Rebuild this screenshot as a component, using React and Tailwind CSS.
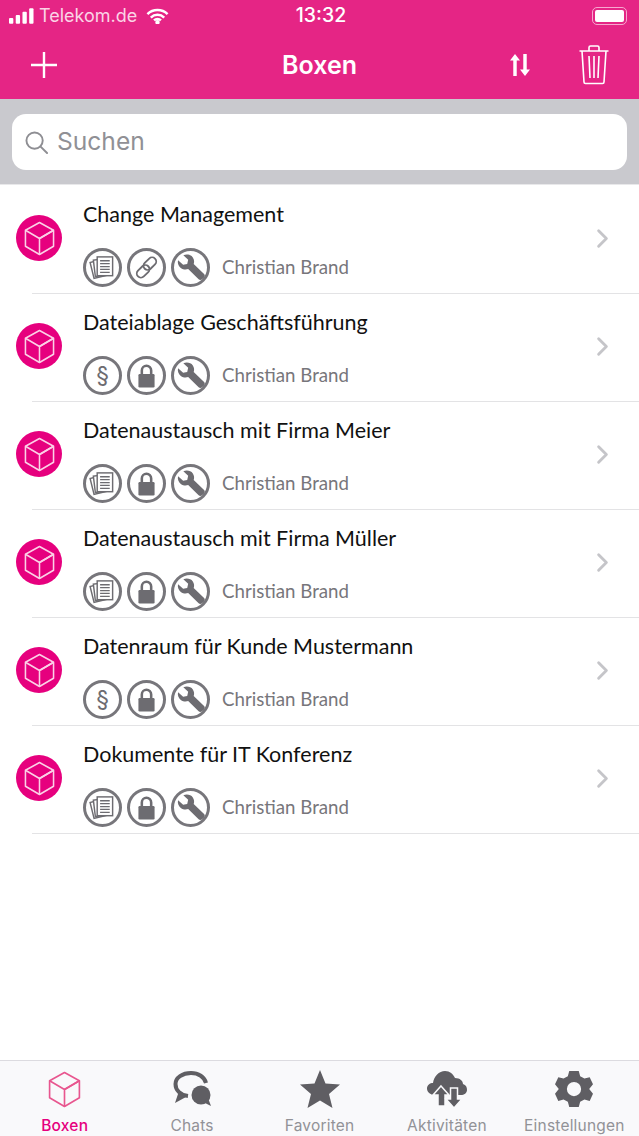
import { ChevronRight } from 'lucide-react'

const ROWS = [
  { title: 'Change Management', icons: ['docs', 'link', 'wrench'] },
  { title: 'Dateiablage Geschäftsführung', icons: ['para', 'lock', 'wrench'] },
  { title: 'Datenaustausch mit Firma Meier', icons: ['docs', 'lock', 'wrench'] },
  { title: 'Datenaustausch mit Firma Müller', icons: ['docs', 'lock', 'wrench'] },
  { title: 'Datenraum für Kunde Mustermann', icons: ['para', 'lock', 'wrench'] },
  { title: 'Dokumente für IT Konferenz', icons: ['docs', 'lock', 'wrench'] },
]

const SF = 'font-["Inter","Liberation_Sans",sans-serif]'

function Cube({ className, stroke = 'currentColor', width = 1.4 }) {
  return (
    <svg viewBox="0 0 32 36" className={className} fill="none" stroke={stroke} strokeWidth={width} strokeLinejoin="round">
      <path d="M16 1.5 30.5 9.5V26L16 34.5 1.5 26V9.5Z" />
      <path d="M1.5 9.5 16 18 30.5 9.5M16 18V34.5" />
      <path d="M16 18 30.5 9.5" />
    </svg>
  )
}

function Badge({ type }) {
  return (
    <div className="w-[39px] h-[39px] rounded-full border-[3px] border-[#77767b] flex items-center justify-center text-[#6d6c71] shrink-0">
      {type === 'para' && <span className={`${SF} text-[23px] leading-none`}>§</span>}
      {type === 'lock' && (
        <svg viewBox="0 0 20 28" className="w-[17px] h-[24px]">
          <path d="M4.5 13V7.500a5.500 5.500 0 0 1 11 0V13" fill="none" stroke="currentColor" strokeWidth="3" />
          <rect x="0.500" y="11.500" width="19" height="16" rx="1.500" fill="currentColor" />
        </svg>
      )}
      {type === 'wrench' && (
        <svg viewBox="0 0 32 32" className="w-[31px] h-[31px]" fill="currentColor">
          <path d="M3.2 8.6 8.4 13.2 12.6 12.4 13.6 8 8.6 3.4C12 1.9 16.4 2.7 18.4 5.6 19.9 7.8 20 10.3 19.3 12.4L30 22.6C31 23.6 31 25 30 26.2L28 28.2C26.8 29.2 25.4 29.2 24.4 28.2L13.6 17.6C11.2 18.4 8.4 18.2 6 16.4 3.4 14.4 2.4 11.4 3.2 8.6Z" />
        </svg>
      )}
      {type === 'link' && (
        <svg viewBox="0 0 28 28" className="w-[27px] h-[27px]" fill="none" stroke="currentColor" strokeWidth="1.900">
          <rect x="13.250" y="2.500" width="8.500" height="15" rx="4.250" transform="rotate(45 17.500 10)" />
          <rect x="6.250" y="10.500" width="8.500" height="15" rx="4.250" transform="rotate(45 10.500 18)" />
        </svg>
      )}
      {type === 'docs' && (
        <svg viewBox="0 0 28 28" className="w-[27px] h-[27px]" fill="#fff" stroke="currentColor" strokeWidth="1.500">
          <rect x="3" y="7" width="13" height="17" transform="rotate(-14 9.500 15.500)" />
          <rect x="5.500" y="5.500" width="14" height="17" transform="rotate(-7 12.500 14)" />
          <rect x="8.500" y="3" width="16" height="19.500" />
          <path d="M11.500 7h10M11.500 10h10M11.500 13h10M11.500 16h10M11.500 19h10" strokeWidth="1.300" />
        </svg>
      )}
    </div>
  )
}

function Row({ title, icons }) {
  return (
    <div className="h-[108px] flex items-center pl-[16px]">
      <div className="w-[46px] h-[46px] rounded-full bg-[#e6007e] flex items-center justify-center shrink-0 -translate-y-[2px]">
        <Cube className="w-[31px] h-[35px]" stroke="#fbd0e6" width={1.6} />
      </div>
      <div className="flex-1 h-full ml-[-30px] pl-[51px] border-b border-[#e3e3e5] flex items-center pr-[21px]">
        <div className="flex-1 pt-[14px] h-full">
          <div className='font-["Lato",sans-serif] text-[21.5px] leading-[29px] text-[#111]'>{title}</div>
          <div className="flex items-center gap-[5px] mt-[19px]">
            {icons.map((t, i) => <Badge key={i} type={t} />)}
            <span className='font-["Lato",sans-serif] text-[18.7px] text-[#77767b] ml-[7px]'>Christian Brand</span>
          </div>
        </div>
        <ChevronRight size={31} strokeWidth={2.2} className="text-[#c5c5c9] -translate-y-[1px]" />
      </div>
    </div>
  )
}

function Tab({ label, active, children }) {
  return (
    <div className="flex-1 flex flex-col items-center">
      <div className="h-[56px] flex items-center justify-center">{children}</div>
      <span className={`${SF} text-[15.5px] leading-[18px] tracking-[0.2px] ${active ? 'text-[#e6007e] font-medium' : 'text-[#929297]'}`}>{label}</span>
    </div>
  )
}

export default function App() {
  return (
    <div className="w-[639px] h-[1136px] bg-white flex flex-col overflow-hidden">
      {/* Header */}
      <div className="bg-[#e52585] h-[99px] text-white shrink-0">
        <div className={`${SF} h-[31px] pl-[9px] flex items-center relative text-[18px]`}>
          <svg viewBox="0 0 26 16" className="w-[25px] h-[16px]" fill="#fff">
            <rect x="0" y="10" width="4.500" height="6" rx="1" />
            <rect x="7" y="7" width="4.500" height="9" rx="1" />
            <rect x="14" y="3.500" width="4.500" height="12.500" rx="1" />
            <rect x="21" y="0" width="4.500" height="16" rx="1" />
          </svg>
          <span className="ml-[5px] text-[#fbd3e6]">Telekom.de</span>
          <svg viewBox="0 0 24 16" className="w-[23px] h-[16px] ml-[9px]" fill="none" stroke="#fff" strokeWidth="2.600">
            <path d="M1.500 6A15 15 0 0 1 22.500 6M5 9.600A10 10 0 0 1 19 9.600M8.400 12.600A5 5 0 0 1 15.600 12.600" />
            <circle cx="12" cy="14.600" r="1" fill="#fff" />
          </svg>
          <span className="absolute left-[3px] right-0 text-center text-[19.5px] font-medium">13:32</span>
          <div className="ml-auto mr-[12px] w-[35px] h-[18px] rounded-[5px] border border-[#f7a8cf] p-[2px]">
            <div className="w-full h-full bg-white rounded-[2px]" />
          </div>
        </div>
        <div className="h-[68px] flex items-center relative">
          <svg viewBox="0 0 28 28" className="w-[28px] h-[28px] ml-[30px]" stroke="#fff" strokeWidth="2.400">
            <path d="M14 1V27M1 14H27" />
          </svg>
          <span className={`${SF} absolute left-0 right-0 text-center text-[25px] font-semibold translate-y-[1px]`}>Boxen</span>
          <svg viewBox="0 0 22 24" className="w-[20px] h-[24px] ml-auto" fill="#fff">
            <path d="M5.500 0 11 7H7.400V24H3.600V7H0Z" />
            <path d="M16.500 24 11 17H14.600V0H18.400V17H22Z" />
          </svg>
          <svg viewBox="0 0 30 40" className="w-[30px] h-[40px] ml-[49px] mr-[30px]" fill="none" stroke="#fff" strokeWidth="1.600">
            <path d="M0.500 6H29.500M10 6V2.500Q10 1 11.500 1H18.500Q20 1 20 2.500V6" />
            <path d="M3 6 5 37Q5 38.500 6.500 38.500H23.500Q25 38.500 25 37L27 6" />
            <path d="M10 11 11 33M15 11V33M20 11 19 33" />
          </svg>
        </div>
      </div>

      {/* Search */}
      <div className="bg-[#c9c9ce] h-[86px] px-[12px] pt-[15px] shrink-0">
        <div className="bg-white rounded-[14px] h-[56px] flex items-center pl-[12px]">
          <svg viewBox="0 0 24 24" className="w-[23px] h-[23px] ml-[1px]" fill="none" stroke="#8e8e93" strokeWidth="2">
            <circle cx="10" cy="10" r="8.500" />
            <path d="M16 16 23 23" strokeLinecap="round" />
          </svg>
          <span className={`${SF} ml-[9px] text-[24.6px] text-[#909095] -translate-y-[1px]`}>Suchen</span>
        </div>
      </div>

      {/* List */}
      <div className="flex-1 pt-[1px] border-t border-[#e8e8ea] -mt-[1px]">
        {ROWS.map(r => <Row key={r.title} title={r.title} icons={r.icons} />)}
      </div>

      {/* Tab bar */}
      <div className="h-[76px] bg-[#f9f9fb] border-t border-[#dcdbe0] flex px-[1px] shrink-0">
        <Tab label="Boxen" active>
          <Cube className="w-[33px] h-[37px]" stroke="#e8568f" width={1.6} />
        </Tab>
        <Tab label="Chats">
          <svg viewBox="0 0 40 36" className="w-[40px] h-[36px]" fill="#5f5e63">
            <path d="M16 25C8 24 3.500 19 3.500 13 3.500 6.500 10.500 2 19 2 26.500 2 32.500 6 34 12" fill="none" stroke="#5f5e63" strokeWidth="4" />
            <path d="M7 20 14 26 3 32Z" />
            <circle cx="29" cy="24" r="9.500" />
            <path d="M31 31 39 35 36 27Z" />
          </svg>
        </Tab>
        <Tab label="Favoriten">
          <svg viewBox="0 0 40 38" className="w-[40px] h-[38px]" fill="#5f5e63">
            <path d="M20 0 25.500 13.500 40 14.500 29 24 32.500 38 20 30.500 7.500 38 11 24 0 14.500 14.500 13.500Z" />
          </svg>
        </Tab>
        <Tab label="Aktivitäten">
          <svg viewBox="0 0 40 40" className="w-[40px] h-[40px]" fill="#5f5e63">
            <path d="M8 26C3 26 0 23 0 19.500 0 16 3 14 6 14 7 7 12 2 18 2 23 2 26 5 28 9 33 9 36 12 36 15 39 16 40 18 40 21 40 24 37 26 34 26Z" />
            <path d="M14 17 22 26H18V37H11V26H6Z" stroke="#f9f9fb" strokeWidth="1.500" />
            <path d="M27 39 35 30H30.500V19H23.500V30H19Z" stroke="#f9f9fb" strokeWidth="1.500" />
          </svg>
        </Tab>
        <Tab label="Einstellungen">
          <svg viewBox="0 0 40 40" className="w-[38px] h-[40px]" fill="#5f5e63" fillRule="evenodd">
            <path d="M15 1H25L26.500 6.500 31 9 36.500 7.500 40 15 36 20 40 25 36.500 32.500 31 31 26.500 33.500 25 39H15L13.500 33.500 9 31 3.500 32.500 0 25 4 20 0 15 3.500 7.500 9 9 13.500 6.500ZM20 12.500A7.500 7.500 0 1 0 20 27.500 7.500 7.500 0 1 0 20 12.500Z" />
          </svg>
        </Tab>
      </div>
    </div>
  )
}
